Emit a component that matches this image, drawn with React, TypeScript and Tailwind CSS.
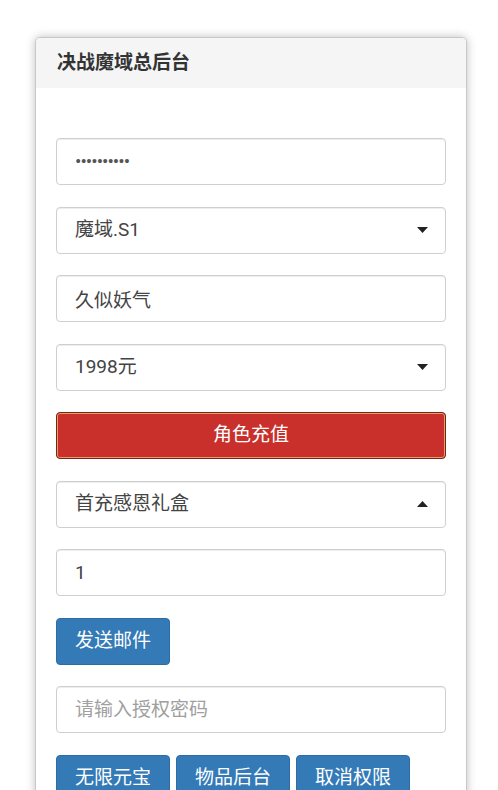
import React from "react";

function Caret({ up = false }: { up?: boolean }) {
    return (
        <svg className="pointer-events-none absolute right-[18px] top-1/2 -translate-y-1/2" width="11" height="6" viewBox="0 0 11 6">
            {up ? <path d="M0 6 L5.5 0 L11 6 Z" fill="#222" /> : <path d="M0 0 L11 0 L5.5 6 Z" fill="#222" />}
        </svg>
    );
}

const field =
    "h-[47px] w-full rounded-[4px] border border-[#cfcfcf] bg-white px-[18px] text-[19px] text-[#444] shadow-[inset_0_1px_1px_rgba(0,0,0,0.075)] outline-none";

function Select({ value, up }: { value: string; up?: boolean }) {
    return (
        <div className="relative">
            <select className={field + " appearance-none text-[#333]"} defaultValue={value}>
                <option>{value}</option>
            </select>
            <Caret up={up} />
        </div>
    );
}

const blueBtn =
    "h-[47px] w-[114px] rounded-[4px] border border-[#2e6da4] bg-[#337ab7] text-[19px] text-white";

export default function App() {
    return (
        <div className="min-h-screen bg-white pt-[37px] pl-[35px] font-['Roboto','Noto_Sans_CJK_SC',sans-serif]">
            <div className="w-[432px] overflow-hidden rounded-t-[5px] border border-[#c8c8c8] bg-white shadow-[0_0_10px_rgba(0,0,0,0.25)]">
                {/* header */}
                <div className="flex h-[50px] items-center bg-[#f5f5f5] px-[21px]">
                    <h1 className="text-[19px] font-bold text-[#333]">决战魔域总后台</h1>
                </div>

                {/* form */}
                <div className="flex flex-col gap-[21.5px] px-[20px] pt-[50px] pb-[30px]">
                    <input type="password" readOnly defaultValue="1234567890" className={field + " tracking-[-1px] text-[#555]"} />
                    <Select value="魔域.S1" />
                    <input readOnly defaultValue="久似妖气" className={field} />
                    <Select value="1998元" />
                    <button className="h-[47px] w-full rounded-[4px] border-[1.5px] border-[#6e2818] bg-[#c9302c] text-[19px] text-white shadow-[inset_0_0_0_1px_#f09a6a]">
                        角色充值
                    </button>
                    <Select value="首充感恩礼盒" up />
                    <input readOnly defaultValue="1" className={field} />
                    <div>
                        <button className={blueBtn}>发送邮件</button>
                    </div>
                    <input placeholder="请输入授权密码" className={field + " placeholder:text-[#a0a0a0]"} />
                    <div className="flex gap-[6px]">
                        <button className={blueBtn}>无限元宝</button>
                        <button className={blueBtn}>物品后台</button>
                        <button className={blueBtn}>取消权限</button>
                    </div>
                </div>
            </div>
        </div>
    );
}
